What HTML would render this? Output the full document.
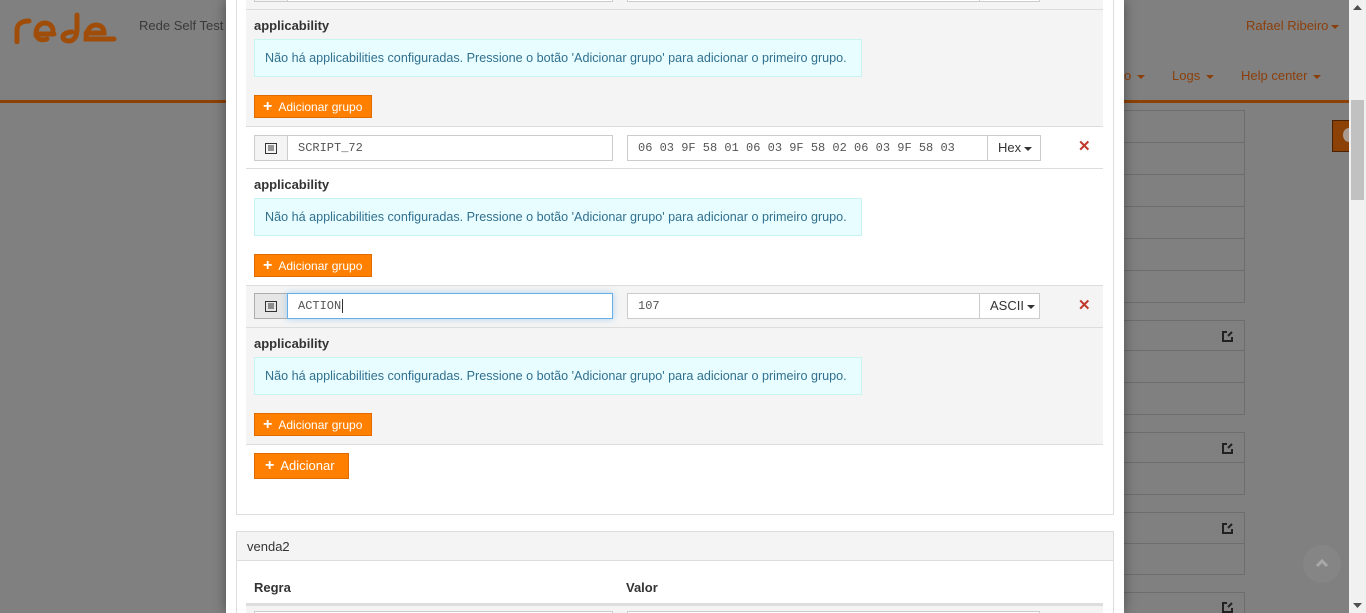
<!DOCTYPE html>
<html><head><meta charset="utf-8"><style>
*{box-sizing:border-box;margin:0;padding:0}
html,body{width:1366px;height:613px;overflow:hidden}
body{position:relative;background:#808080;font-family:"Liberation Sans",sans-serif;font-size:13px;color:#333}
#w{position:absolute;left:0;top:0;width:1366px;height:613px;overflow:hidden}
.a{position:absolute}
.line{position:absolute;height:1px;background:#6d6d6d}
.inp{position:absolute;height:26px;border:1px solid #ccc;background:#fff;font-family:"Liberation Mono",monospace;font-size:12px;color:#555;line-height:24px;padding-left:10px}
.ico{position:absolute;width:34px;height:26px;border:1px solid #ccc;background:#f4f4f4}
.dd{position:absolute;height:26px;border:1px solid #ccc;background:#fff;font-size:13px;color:#333;line-height:24px;padding-left:10px}
.car{display:inline-block;width:0;height:0;border-left:4px solid transparent;border-right:4px solid transparent;border-top:4px solid #333;vertical-align:middle;margin-left:3px}
.x{position:absolute;color:#c0392b;font-weight:bold;font-size:15px}
.lbl{position:absolute;left:254px;font-weight:bold;font-size:13px;color:#333}
.al{position:absolute;left:254px;width:608px;height:38px;background:#e8fdff;border:1px solid #c8f5f2;color:#31708f;font-size:12.6px;line-height:36px;padding-left:10px;white-space:nowrap;overflow:hidden}
.btn{position:absolute;left:254px;width:118px;height:23px;background:#ff7f00;border:1px solid #e06b00;color:#fff;font-size:12px;line-height:21px;padding-left:8px}
.btn b{font-size:16px;margin-right:6px;font-weight:bold}
.hl{position:absolute;left:246px;width:857px;height:1px;background:#ddd}
</style></head><body><div id="w">
<div class="a" style="left:0;top:0;width:1349px;height:100px;background:#808080"></div>
<svg class="a" style="left:14px;top:12px" width="108" height="32" viewBox="0 0 108 32"><g fill="none" stroke="#a04d0a" stroke-width="5" stroke-linecap="round"><path d="M3 30V18c0-6 5-9 12-9"/><path d="M40 22H22c0-7 4-11 9-11s8 4 8 8M22 22c1 5 5 7 11 5"/><path d="M58 20c-5 0-9 2-9 5s3 4 6 4c5 0 8-5 8-12V3"/><path d="M100 27H72c0-8 4-14 10-14s8 4 8 8H72"/></g></svg>
<div class="a" style="left:139px;top:18px;color:#3a3a3a;font-size:13px">Rede Self Test P</div>
<div class="a" style="left:1246px;top:18px;color:#8a3f0a;font-size:13px">Rafael Ribeiro<span class="car" style="border-top-color:#8a3f0a"></span></div>
<div class="a" style="left:1124px;top:68px;color:#8a3f0a;font-size:13px">o<span class="car" style="border-top-color:#8a3f0a;margin-left:6px"></span></div>
<div class="a" style="left:1172px;top:68px;color:#8a3f0a;font-size:13px">Logs<span class="car" style="border-top-color:#8a3f0a;margin-left:6px"></span></div>
<div class="a" style="left:1241px;top:68px;color:#8a3f0a;font-size:13px">Help center<span class="car" style="border-top-color:#8a3f0a;margin-left:6px"></span></div>
<div class="a" style="left:0;top:100px;width:1349px;height:3px;background:#8c4106"></div>
<div class="a" style="left:1124px;top:110px;width:121px;height:193px;border:1px solid #6d6d6d;border-left:none"></div>
<div class="line" style="left:1124px;top:142px;width:120px"></div>
<div class="line" style="left:1124px;top:174px;width:120px"></div>
<div class="line" style="left:1124px;top:206px;width:120px"></div>
<div class="line" style="left:1124px;top:238px;width:120px"></div>
<div class="line" style="left:1124px;top:270px;width:120px"></div>
<div class="a" style="left:1124px;top:320px;width:121px;height:95px;border:1px solid #6d6d6d;border-left:none"></div>
<div class="line" style="left:1124px;top:350px;width:120px"></div>
<div class="line" style="left:1124px;top:382px;width:120px"></div>
<div class="a" style="left:1124px;top:432px;width:121px;height:63px;border:1px solid #6d6d6d;border-left:none"></div>
<div class="line" style="left:1124px;top:462px;width:120px"></div>
<div class="a" style="left:1124px;top:512px;width:121px;height:63px;border:1px solid #6d6d6d;border-left:none"></div>
<div class="line" style="left:1124px;top:543px;width:120px"></div>
<div class="a" style="left:1124px;top:592px;width:121px;height:30px;border:1px solid #6d6d6d;border-left:none"></div>
<svg class="a" style="left:1221px;top:330px" width="13" height="13"><path d="M6 2H2v9h9V7M7 6l4-4" fill="none" stroke="#222" stroke-width="2"/></svg>
<svg class="a" style="left:1221px;top:442px" width="13" height="13"><path d="M6 2H2v9h9V7M7 6l4-4" fill="none" stroke="#222" stroke-width="2"/></svg>
<svg class="a" style="left:1221px;top:522px" width="13" height="13"><path d="M6 2H2v9h9V7M7 6l4-4" fill="none" stroke="#222" stroke-width="2"/></svg>
<svg class="a" style="left:1221px;top:601px" width="13" height="13"><path d="M6 2H2v9h9V7M7 6l4-4" fill="none" stroke="#222" stroke-width="2"/></svg>
<div class="a" style="left:1332px;top:120px;width:20px;height:32px;background:#8c4106;border:1px solid #4a2000"></div>
<div class="a" style="left:1343px;top:128px;width:12px;height:14px;border-radius:50%;background:#a89a90"></div>
<div class="a" style="left:1303px;top:545px;width:38px;height:38px;border-radius:50%;background:#858585"></div>
<svg class="a" style="left:1315px;top:558px" width="14" height="10"><path d="M2 8l5-5 5 5" fill="none" stroke="#a8a8a8" stroke-width="3"/></svg>
<div class="a" style="left:1349px;top:0;width:17px;height:613px;background:#f1f1f1"></div>
<div class="a" style="left:1351px;top:100px;width:13px;height:100px;background:#c1c1c1"></div>
<svg class="a" style="left:1352px;top:3px" width="11" height="8"><path d="M1 7l4.5-5 4.5 5z" fill="#505050"/></svg>
<svg class="a" style="left:1352px;top:602px" width="11" height="8"><path d="M1 1l4.5 5 4.5-5z" fill="#505050"/></svg>
<div class="a" style="left:226px;top:0;width:898px;height:613px;background:#fff;box-shadow:0 0 12px rgba(0,0,0,.4)"></div>
<div class="a" style="left:236px;top:-10px;width:878px;height:525px;border:1px solid #ddd"></div>
<div class="a" style="left:246px;top:0;width:857px;height:126px;background:#f4f4f4"></div>
<div class="a" style="left:246px;top:286px;width:857px;height:158px;background:#f4f4f4"></div>
<div class="hl" style="top:9px"></div><div class="hl" style="top:126px"></div><div class="hl" style="top:168px"></div><div class="hl" style="top:285px"></div><div class="hl" style="top:327px"></div><div class="hl" style="top:444px"></div>
<div class="ico" style="left:254px;top:-24px"></div><div class="inp" style="left:287px;top:-24px;width:326px"></div><div class="inp" style="left:627px;top:-24px;width:353px"></div><div class="dd" style="left:979px;top:-24px;width:61px"></div>
<div class="lbl" style="top:18px">applicability</div>
<div class="al" style="top:39px">Não há applicabilities configuradas. Pressione o botão 'Adicionar grupo' para adicionar o primeiro grupo.</div>
<div class="btn" style="top:95px"><b>+</b>Adicionar grupo</div>
<div class="ico" style="left:254px;top:135px"><svg style="position:absolute;left:10px;top:7px" width="12" height="11"><rect x=".5" y=".5" width="11" height="10" fill="none" stroke="#333"/><path d="M3 3h6M3 5h6M3 7h6" stroke="#333"/></svg></div>
<div class="inp" style="left:287px;top:135px;width:326px">SCRIPT_72</div>
<div class="inp" style="left:627px;top:135px;width:361px">06 03 9F 58 01 06 03 9F 58 02 06 03 9F 58 03</div>
<div class="dd" style="left:987px;top:135px;width:54px">Hex<span class="car"></span></div>
<div class="x" style="left:1078px;top:137px">✕</div>
<div class="lbl" style="top:177px">applicability</div>
<div class="al" style="top:198px">Não há applicabilities configuradas. Pressione o botão 'Adicionar grupo' para adicionar o primeiro grupo.</div>
<div class="btn" style="top:254px"><b>+</b>Adicionar grupo</div>
<div class="ico" style="left:254px;top:293px;background:#e6e6e6;border-color:#adadad"><svg style="position:absolute;left:10px;top:7px" width="12" height="11"><rect x=".5" y=".5" width="11" height="10" fill="none" stroke="#333"/><path d="M3 3h6M3 5h6M3 7h6" stroke="#333"/></svg></div>
<div class="inp" style="left:287px;top:293px;width:326px;border-color:#66afe9;box-shadow:0 0 6px rgba(102,175,233,.5)">ACTION<span style="border-left:1px solid #333;margin-left:1px"></span></div>
<div class="inp" style="left:627px;top:293px;width:353px">107</div>
<div class="dd" style="left:979px;top:293px;width:61px">ASCII<span class="car"></span></div>
<div class="x" style="left:1078px;top:296px">✕</div>
<div class="lbl" style="top:336px">applicability</div>
<div class="al" style="top:357px">Não há applicabilities configuradas. Pressione o botão 'Adicionar grupo' para adicionar o primeiro grupo.</div>
<div class="btn" style="top:413px"><b>+</b>Adicionar grupo</div>
<div class="btn" style="top:453px;width:95px;height:26px;line-height:24px;font-size:13px;padding-left:10px"><b>+</b>Adicionar</div>
<div class="a" style="left:236px;top:531px;width:878px;height:100px;border:1px solid #ddd"></div>
<div class="a" style="left:237px;top:532px;width:876px;height:29px;background:#f4f4f4;border-bottom:1px solid #ddd;padding:7px 0 0 10px;font-size:13px">venda2</div>
<div class="lbl" style="top:580px">Regra</div>
<div class="lbl" style="top:580px;left:626px">Valor</div>
<div class="a" style="left:246px;top:603px;width:857px;height:3px;background:#ddd"></div>
<div class="a" style="left:246px;top:606px;width:857px;height:7px;background:#f4f4f4"></div>
<div class="a" style="left:254px;top:611px;width:359px;height:2px;border:1px solid #ccc;border-bottom:none;background:#fff"></div>
<div class="a" style="left:627px;top:611px;width:413px;height:2px;border:1px solid #ccc;border-bottom:none;background:#fff"></div>
</div></body></html>
